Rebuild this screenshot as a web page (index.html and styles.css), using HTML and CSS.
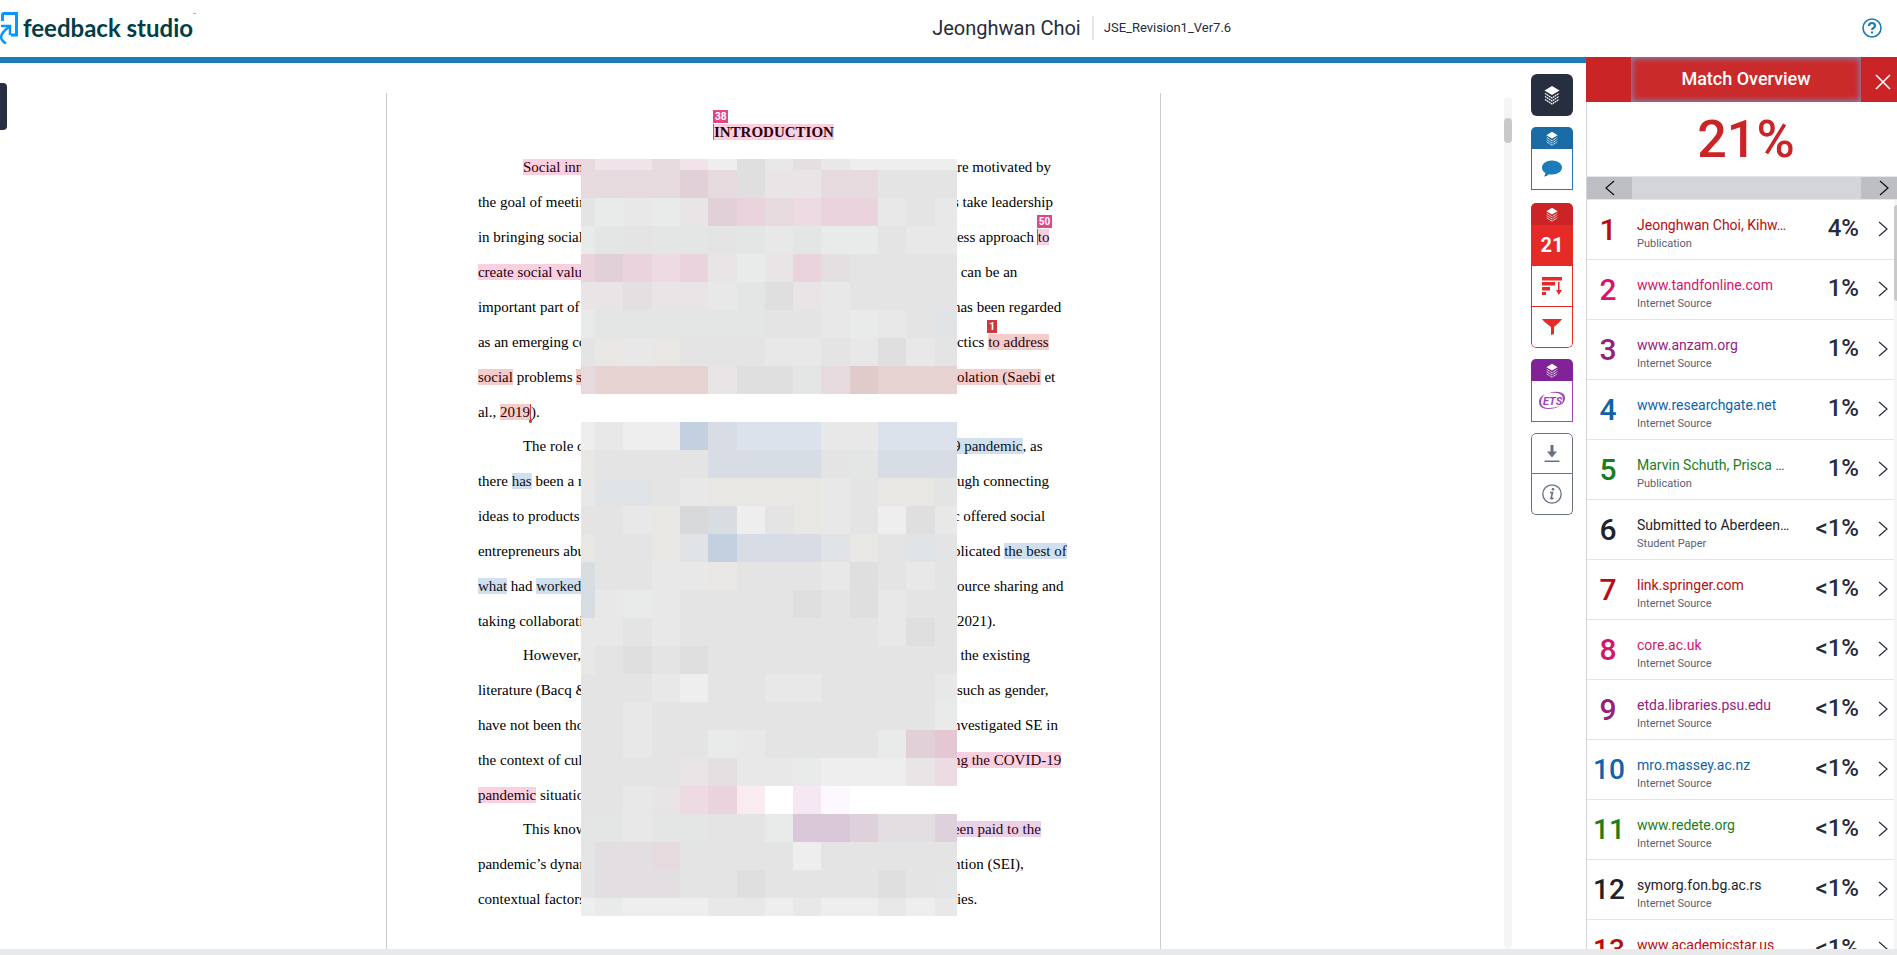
FILE: index.html
```html
<!DOCTYPE html>
<html lang="en">
<head>
    <meta charset="UTF-8">
    <meta name="viewport" content="width=device-width, initial-scale=1.0">
    <title>Feedback Studio</title>
    <link rel="stylesheet" href="styles.css">
</head>
<body>
    <svg class="defs" aria-hidden="true">
        <symbol id="layers" viewBox="0 0 16 20">
            <path d="M8 1l7.500 4.500L8 10 .5 5.500z" fill="#fff"/>
            <path d="M1 8.500l7 4.500 7-4.500M1 11.500L8 16l7-4.500M1 14.500L8 19l7-4.500" fill="none" stroke="#fff" stroke-width="1.200" stroke-dasharray="1.800 .5"/>
        </symbol>
        <symbol id="next" viewBox="0 0 10 16">
            <path d="M1 1l8 7-8 7" fill="none" stroke="currentColor" stroke-width="1.200"/>
        </symbol>
        <symbol id="prev" viewBox="0 0 10 16">
            <path d="M9 1L1 8l8 7" fill="none" stroke="currentColor" stroke-width="1.200"/>
        </symbol>
    </svg>

    <header class="topbar">
        <div class="logo">
            <svg width="19" height="34" viewBox="0 0 19 34">
                <path d="M2.500 10V4q0-1.500 1.500-1.500h12.500V24H11" fill="none" stroke="#0a96ff" stroke-width="3"/>
                <path d="M1 15h9v9" fill="none" stroke="#0a96ff" stroke-width="2.500"/>
                <path d="M9 16Q-5 26 6 32.500" fill="none" stroke="#0a96ff" stroke-width="2.500"/>
            </svg>
            <span class="logo-text">feedback studio</span><span class="tm">™</span>
        </div>
        <div class="doc-title">
            <h1>Jeonghwan Choi</h1>
            <span class="file-name">JSE_Revision1_Ver7.6</span>
        </div>
        <button class="help" aria-label="Help">
            <svg width="20" height="20" viewBox="0 0 20 20">
                <circle cx="10" cy="10" r="9" fill="none" stroke="#1c7bbb" stroke-width="1.600"/>
                <path d="M7 8q0-3 3-3t3 2.700q0 1.300-1.500 2.300T10 12" fill="none" stroke="#1c7bbb" stroke-width="2.200"/>
                <path d="M8.900 13.500h2.200v2H8.900z" fill="#1c7bbb"/>
            </svg>
        </button>
    </header>

    <main>
        <section class="workspace">
            <button class="side-tab" aria-label="Open thumbnails"></button>
            <div class="viewer">
                <article class="paper">
                    <h2><mark class="pink start"><span class="badge">38</span>INTRODUCTION</mark></h2>
                    <div class="par">
                        <div class="line"><span><mark class="pink">Social innov</mark></span><span>re motivated by</span></div>
                        <div class="line"><span>the goal of meeting</span><span class="cut">s take leadership</span></div>
                        <div class="line"><span>in bringing social</span><span>ess approach <mark class="pink start"><span class="badge">50</span>to</mark></span></div>
                        <div class="line"><span><mark class="pink">create social value</mark></span><span> can be an</span></div>
                        <div class="line"><span>important part of</span><span class="cut">has been regarded</span></div>
                        <div class="line"><span>as an emerging co</span><span>ctics <mark class="red"><span class="badge">1</span>to address</mark></span></div>
                        <div class="line"><span><mark class="red">social</mark> problems <mark class="red">su</mark></span><span><mark class="red">olation (Saebi</mark> et</span></div>
                        <div class="line"><span>al., <mark class="red end">2019</mark>).</span></div>
                    </div>
                    <div class="par">
                        <div class="line"><span>The role of</span><span class="cut"><mark class="blue">9 pandemic</mark>, as</span></div>
                        <div class="line"><span>there <mark class="blue">has</mark> been a n</span><span>ugh connecting</span></div>
                        <div class="line"><span>ideas to products</span><span class="cut">c offered social</span></div>
                        <div class="line"><span>entrepreneurs abun</span><span class="cut">plicated <mark class="blue">the best of</mark></span></div>
                        <div class="line"><span><mark class="blue">what</mark> had <mark class="blue">worked </mark></span><span>ource sharing and</span></div>
                        <div class="line"><span>taking collaborati</span><span>2021).</span></div>
                    </div>
                    <div class="par">
                        <div class="line"><span>However,</span><span class="cut">, the existing</span></div>
                        <div class="line"><span>literature (Bacq &amp;</span><span>such as gender,</span></div>
                        <div class="line"><span>have not been thor</span><span class="cut">nvestigated SE in</span></div>
                        <div class="line"><span>the context of cult</span><span class="cut"><mark class="pink">ng the COVID-19</mark></span></div>
                        <div class="line"><span><mark class="pink">pandemic</mark> situation</span></div>
                    </div>
                    <div class="par">
                        <div class="line"><span>This know</span><span class="cut"><mark class="purple">een paid to the</mark></span></div>
                        <div class="line"><span>pandemic’s dynam</span><span class="cut">ntion (SEI),</span></div>
                        <div class="line"><span>contextual factors</span><span>ies.</span></div>
                    </div>
                    <div class="mosaic" id="mosaic"></div>
                </article>
            </div>
            <div class="scroll"><div class="thumb"></div></div>
            <nav class="tools">
                <button class="tool-all" aria-label="All layers"><svg width="16" height="20"><use href="#layers"/></svg></button>
                <div class="tool-group comments">
                    <button class="tool-head" aria-label="Grading layer"><svg width="12" height="15"><use href="#layers"/></svg></button>
                    <button class="tool" aria-label="Comments">
                        <svg width="20" height="18" viewBox="0 0 20 18"><path d="M10 .5c5.500 0 10 3 10 7s-4.500 7-10 7q-1.700 0-3-.3Q5 16.500 1.500 16.500 3.500 15 3.500 13 0 11 0 7.500c0-4 4.500-7 10-7z" fill="#1c7bbb"/></svg>
                    </button>
                </div>
                <div class="tool-group similarity">
                    <button class="tool-head" aria-label="Similarity layer"><svg width="12" height="15"><use href="#layers"/></svg></button>
                    <button class="tool score">21</button>
                    <button class="tool" aria-label="All sources">
                        <svg width="20" height="18" viewBox="0 0 20 18"><path d="M0 0h20v3.500H0zM0 5h13v3.500H0zM0 10h8v3.500H0zM0 15h4v3H0zM16 5h1.500v8H20l-3.200 5L14 13h2z" fill="#e62a28"/></svg>
                    </button>
                    <button class="tool" aria-label="Filters">
                        <svg width="20" height="16" viewBox="0 0 20 16"><path d="M0 0h20q-1 2-8 8v7l-3 1V8Q1 2 0 0z" fill="#e62a28"/></svg>
                    </button>
                </div>
                <div class="tool-group ets">
                    <button class="tool-head" aria-label="ETS layer"><svg width="12" height="15"><use href="#layers"/></svg></button>
                    <button class="tool" aria-label="ETS">
                        <svg width="28" height="20" viewBox="0 0 28 20">
                            <path d="M7 3Q1 6 1 11q0 7 9 7 7 0 12-3-6 2-11 2-8 0-8-6 0-4 4-8zM9 3q6-3 12-2 6 1 6 6 0 4-4 7 2-3 2-6 0-5-6-6-5-1-10 1z" fill="#a343b5"/>
                            <text x="5" y="14" class="ets-text">ETS</text>
                        </svg>
                    </button>
                </div>
                <div class="tool-group misc">
                    <button class="tool" aria-label="Download">
                        <svg width="16" height="18" viewBox="0 0 16 18"><path d="M6.500 0h3v6.500H13l-5 6-5-6h3.500zM.5 15.500h15V17H.5z" fill="#697080"/></svg>
                    </button>
                    <button class="tool" aria-label="Submission information">
                        <svg width="20" height="20" viewBox="0 0 20 20"><circle cx="10" cy="10" r="9.200" fill="none" stroke="#697080" stroke-width="1.300"/><circle cx="11" cy="5.300" r="1.300" fill="#697080"/><path d="M8 8.500h2.500L9 14.500q.5.800 2.500-.7" fill="none" stroke="#697080" stroke-width="1.600"/></svg>
                    </button>
                </div>
            </nav>
        </section>

        <aside class="panel">
            <div class="panel-head">
                <button class="panel-title">Match Overview</button>
                <button class="close" aria-label="Close"><svg width="16" height="16" viewBox="0 0 16 16"><path d="M1 1l14 14M15 1L1 15" stroke="#fff" stroke-width="1.600"/></svg></button>
            </div>
            <div class="total">21%</div>
            <div class="pager">
                <button aria-label="Previous"><svg width="10" height="16"><use href="#prev"/></svg></button>
                <button aria-label="Next"><svg width="10" height="16"><use href="#next"/></svg></button>
            </div>
            <ol class="matches" id="matches"></ol>
            <div class="panel-scroll"><div class="thumb"></div></div>
        </aside>
    </main>
    <footer></footer>
    <script src="script.js"></script>
</body>
</html>
```
FILE: styles.css
```css
* {
    box-sizing: border-box;
}
body {
    margin: 0;
    height: 100vh;
    display: flex;
    flex-direction: column;
    overflow: hidden;
    background: #fff;
    color: #252c3c;
    font-family: Roboto, "Liberation Sans", sans-serif;
}
button {
    border: none;
    padding: 0;
    background: none;
    color: inherit;
    font-family: inherit;
    cursor: pointer;
    display: flex;
    align-items: center;
    justify-content: center;
}
.defs {
    position: absolute;
    width: 0;
    height: 0;
}

/* Top bar */
.topbar {
    flex: none;
    height: 57px;
    display: grid;
    grid-template-columns: 7fr auto 5fr;
    align-items: center;
    padding-bottom: 2px;
}
.logo {
    display: flex;
    align-items: center;
    color: #003f48;
}
.logo-text {
    margin-left: 4px;
    font-family: Lato, sans-serif;
    font-size: 24px;
    font-weight: 700;
    line-height: 32px;
}
.tm {
    font-size: 5px;
    align-self: flex-start;
}
.doc-title {
    display: flex;
    align-items: center;
}
.doc-title h1 {
    margin: 0;
    padding-right: 11px;
    border-right: 2px solid #e5e6e8;
    font-size: 20px;
    font-weight: 400;
    line-height: 24px;
}
.file-name {
    margin-left: 10px;
    font-size: 13px;
}
.help {
    justify-self: end;
    margin-right: 15px;
}

main {
    flex: 1;
    min-height: 0;
    display: flex;
}
footer {
    flex: none;
    height: 6px;
    background: #e8e9eb;
}

/* Document */
.workspace {
    position: relative;
    flex: 1;
    min-width: 0;
    display: flex;
    border-top: 6px solid #1c7bbb;
}
.side-tab {
    position: absolute;
    left: 0;
    top: 20px;
    width: 7px;
    height: 47px;
    border-radius: 0 4px 4px 0;
    background: #272e3f;
}
.viewer {
    flex: 1;
    min-width: 0;
    padding-top: 30px;
    overflow: hidden;
    display: grid;
    grid-template-columns: 9fr 775px 8fr;
}
.paper {
    grid-column: 2;
    position: relative;
    padding: 22px 90px 0 91px;
    border: solid #ccc;
    border-width: 0 1px;
    background: #fff;
    color: #000;
    font-family: "Liberation Serif", serif;
    font-size: 15px;
    line-height: 35px;
}
.paper h2 {
    margin: 0;
    font-size: 15px;
    font-weight: 700;
    text-align: center;
}
.par + .par {
    margin-top: -1px;
}
.line {
    display: grid;
    grid-template-columns: 479px 1fr;
    white-space: pre;
}
.par .line:first-child span:first-child {
    text-indent: 45px;
}
.line .cut {
    margin-left: -4px;
}
mark {
    position: relative;
    color: inherit;
}
.pink {
    background: #f9d0df;
    color: #2a0010;
}
.red {
    background: #f5cccc;
    color: #2a0505;
}
.blue {
    background: #d2dfef;
    color: #0a1420;
}
.purple {
    background: #ead1e8;
    color: #22061f;
}
.start {
    box-shadow: -1px 0 #dd3d82;
}
.end {
    border-right: 1px solid #c93a3c;
}
.end::after {
    content: "";
    position: absolute;
    right: -2px;
    bottom: -3px;
    width: 3px;
    height: 4px;
    border-radius: 2px;
    background: #c93a3c;
}
.par .badge,
.badge {
    position: absolute;
    left: -1px;
    top: -14px;
    padding: 0 2px;
    background: #e0468a;
    color: #fff;
    font-family: Roboto, sans-serif;
    font-size: 10px;
    font-weight: 700;
    line-height: 13px;
}
.red .badge {
    background: #c93a3c;
}
.mosaic {
    position: absolute;
    left: 194px;
    top: 66px;
    width: 376px;
    display: grid;
    grid-template-columns: 14fr repeat(12, 28fr) 22fr;
    grid-template-rows: 11px repeat(26, 28px) 18px;
}
.scroll {
    width: 8px;
    margin-top: 34px;
    margin-bottom: 1px;
    padding-top: 21px;
    border-radius: 4px;
    background: #f5f5f5;
}
.thumb {
    height: 25px;
    border-radius: 4px;
    background: #c9c9c9;
}

/* Tool strip */
.tools {
    width: 74px;
    padding: 11px 13px 0 19px;
    display: flex;
    flex-direction: column;
    gap: 11px;
}
.tool-all {
    height: 42px;
    border-radius: 6px;
    background: #272e3f;
}
.tool-group {
    border-radius: 5px 5px 0 0;
    overflow: hidden;
    color: #697080;
}
.tool-head {
    width: 100%;
    height: 22px;
}
.tool {
    width: 100%;
    height: 41px;
    border: 1px solid;
    border-top: none;
}
.comments {
    margin-bottom: 2px;
    color: #1c7bbb;
}
.comments .tool-head {
    background: #1b6ca6;
}
.similarity {
    border-radius: 5px;
    color: #e62a28;
}
.similarity .tool-head {
    background: #cb2426;
}
.tool.score {
    background: #e62a28;
    border-color: #e62a28;
    color: #fff;
    font-size: 20px;
    font-weight: 700;
}
.similarity .tool:last-child,
.misc .tool:last-child {
    border-radius: 0 0 5px 5px;
}
.ets {
    color: #a343b5;
}
.ets .tool-head {
    background: #812296;
}
.ets-text {
    fill: #a343b5;
    font-size: 11px;
    font-weight: 700;
    font-style: italic;
}
.misc .tool:first-child {
    border-top: 1px solid;
    border-radius: 5px 5px 0 0;
}

/* Match overview */
.panel {
    position: relative;
    flex: none;
    width: 311px;
    display: flex;
    flex-direction: column;
}
.panel-head {
    flex: none;
    height: 45px;
    display: grid;
    grid-template-columns: 1fr 36px;
    padding-left: 45px;
    background: #cb2426;
    color: #fff;
}
.panel-title {
    padding-bottom: 2px;
    background: #cb2a2b;
    box-shadow: inset 0 0 6px 1px #7f8fbe;
    font-size: 18px;
    font-weight: 500;
}
.close {
    padding: 4px 0 0 8px;
}
.total,
.pager,
.matches {
    border-left: 1px solid #d4d5d9;
}
.total {
    flex: none;
    height: 74px;
    padding: 1px 36px 0 44px;
    color: #cb2426;
    font-size: 52px;
    font-weight: 500;
    line-height: 74px;
    text-align: center;
}
.pager {
    flex: none;
    height: 24px;
    display: flex;
    justify-content: space-between;
    border-top: 1px solid #e4e5e7;
    border-bottom: 1px solid #e4e5e7;
    background: #d4d5d9;
    color: #111;
}
.pager button {
    width: 45px;
    background: #bebfc4;
}
.pager button:last-child {
    width: 36px;
    padding-left: 9px;
}
.matches {
    flex: 1;
    min-height: 0;
    margin: 0;
    padding: 0;
    overflow: hidden;
    list-style: none;
}
.matches li {
    height: 60px;
    display: grid;
    grid-template-columns: 50px 1fr 66px 38px;
    border-bottom: 1px solid #e5e6e8;
}
.rank {
    padding-right: 8px;
    font-size: 30px;
    line-height: 60px;
    text-align: center;
}
.rank.wide {
    padding-right: 6px;
    font-size: 28px;
}
.source {
    min-width: 0;
    padding-top: 16px;
}
.source a {
    display: block;
    overflow: hidden;
    font-size: 14px;
    line-height: 19px;
    text-decoration: none;
    text-overflow: ellipsis;
    white-space: nowrap;
}
.source small {
    display: block;
    color: #5a6272;
    font-size: 11px;
    line-height: 18px;
}
.percent {
    font-size: 24px;
    line-height: 57px;
    text-align: right;
}
.rank,
.percent {
    font-weight: 500;
}
.matches button {
    height: 57px;
    padding-left: 10px;
}
.c1 { color: #b80c10; }
.c2 { color: #d3156b; }
.c3 { color: #96207f; }
.c4 { color: #0f62ab; }
.c5 { color: #1b7d1e; }
.c6 { color: #20232c; }
.panel-scroll {
    position: absolute;
    right: 0;
    top: 143px;
    bottom: 0;
    width: 3px;
    padding-top: 5px;
    background: #f5f5f5;
}
.panel-scroll .thumb {
    height: 96px;
    border-radius: 4px 0 0 4px;
}
```
FILE: script.js
```js
const matches = [
    ['Jeonghwan Choi, Kihw…', 'Publication', '4%'],
    ['www.tandfonline.com', 'Internet Source', '1%'],
    ['www.anzam.org', 'Internet Source', '1%'],
    ['www.researchgate.net', 'Internet Source', '1%'],
    ['Marvin Schuth, Prisca …', 'Publication', '1%'],
    ['Submitted to Aberdeen…', 'Student Paper', '<1%'],
    ['link.springer.com', 'Internet Source', '<1%'],
    ['core.ac.uk', 'Internet Source', '<1%'],
    ['etda.libraries.psu.edu', 'Internet Source', '<1%'],
    ['mro.massey.ac.nz', 'Internet Source', '<1%'],
    ['www.redete.org', 'Internet Source', '<1%'],
    ['symorg.fon.bg.ac.rs', 'Internet Source', '<1%'],
    ['www.academicstar.us', 'Internet Source', '<1%']
];

// six colours, repeated down the list
document.getElementById('matches').innerHTML = matches.map(([name, type, percent], i) => {
    const color = 'c' + (i % 6 + 1);
    return `<li>
        <span class="rank ${color} ${i > 8 ? 'wide' : ''}">${i + 1}</span>
        <div class="source"><a href="#" class="${color}">${name}</a><small>${type}</small></div>
        <span class="percent">${percent.replace('<', '&lt;')}</span>
        <button aria-label="Show match"><svg width="10" height="16"><use href="#next"/></svg></button>
    </li>`;
}).join('');

// Pixelated cover over the middle of the page, one letter per cell
const colors = {
    '.': '#ffffff', l: '#eeeeee', g: '#e8e8e8', h: '#e4e4e4', d: '#dfdfdf',
    m: '#e8ebea', n: '#e3e6e5', v: '#e9e4e6', q: '#e4dfe1', y: '#e8e7e4',
    r: '#e6dadf', s: '#e2d0d8', t: '#eedae2', p: '#ebd3dd', P: '#e5c7d3',
    R: '#e7d3d2', S: '#e0cbca', b: '#dce2eb', c: '#d8dde5', B: '#c3d0e0',
    k: '#e0e4e7', K: '#d8dde1', D: '#d8d9db', u: '#d9c9d8', w: '#dfd1dc',
    x: '#e3dee2', L: '#f6e8f3', N: '#f8ecf0', Z: '#fdf8fd', e: '#f1e3e9'
};
const rows = [
    'reereldgqgllll',
    'rrrrsrdvvrrhhh',
    'hmgmvsprtppghg',
    'mnhnnhngnmmhgg',
    'psptpvmvpqhhhh',
    'vvqvvgndvghhhh',
    'mnnnnnnhhgmghk',
    'hygyhhhgghgdgh',
    'rRRRRvddnrSRRR',
    '..............',
    'lgllBcbbbggbbb',
    'yhhhhcccchnccc',
    'gkkhgyyyyghyyh',
    'hhgyDKlhyghldg',
    'yhhykBccckyhkh',
    'Khhggyhhhgdhgh',
    'Kgmghhhhdhdghh',
    'gghghhhhhhhgdh',
    'ghdhdhhhhhhhhh',
    'hhhglhhgghhhhg',
    'hhghhhhhhhhhhm',
    'hhghhmghhhhmsP',
    'hhhhvqggmlllvt',
    'hhgvtpN.LZ....',
    'nngnnhhmuuwxxw',
    'nxxrhhhhlhhhhh',
    'hxxxhhdhhhhdhn',
    'lmlllgglgllglg'
];
const mosaic = document.getElementById('mosaic');
rows.join('').split('').forEach(key => {
    const cell = document.createElement('div');
    cell.style.background = colors[key];
    mosaic.appendChild(cell);
});
```
